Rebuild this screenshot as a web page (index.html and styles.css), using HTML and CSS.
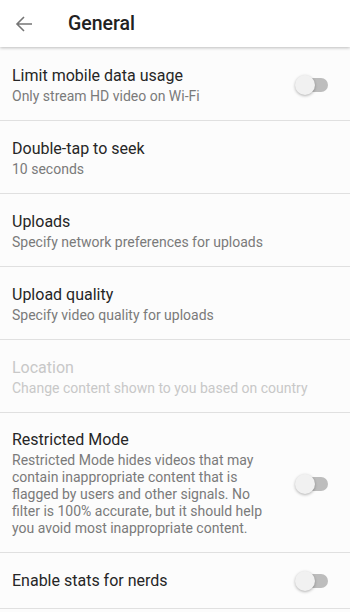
FILE: index.html
```html
<!DOCTYPE html>
<html lang="en">
<head>
  <meta charset="UTF-8">
  <meta name="viewport" content="width=device-width, initial-scale=1.0">
  <title>General</title>
  <link rel="stylesheet" href="styles.css">
</head>
<body>
  <div class="header">
    <a href="#" class="back-icon">
      <svg width="18" height="18" viewBox="0 0 18 18"><path d="M17 9H2M9 2L2 9l7 7" fill="none" stroke="#757575" stroke-width="1.6"/></svg>
    </a>
    <h1>General</h1>
  </div>

  <div class="list">
    <div class="row">
      <div class="row-text">
        <div class="title">Limit mobile data usage</div>
        <div class="sub">Only stream HD video on Wi-Fi</div>
      </div>
      <span class="switch"></span>
    </div>
    <div class="row">
      <div class="row-text">
        <div class="title">Double-tap to seek</div>
        <div class="sub">10 seconds</div>
      </div>
    </div>
    <div class="row">
      <div class="row-text">
        <div class="title">Uploads</div>
        <div class="sub">Specify network preferences for uploads</div>
      </div>
    </div>
    <div class="row">
      <div class="row-text">
        <div class="title">Upload quality</div>
        <div class="sub">Specify video quality for uploads</div>
      </div>
    </div>
    <div class="row disabled">
      <div class="row-text">
        <div class="title">Location</div>
        <div class="sub">Change content shown to you based on country</div>
      </div>
    </div>
    <div class="row">
      <div class="row-text">
        <div class="title">Restricted Mode</div>
        <div class="sub">Restricted Mode hides videos that may contain inappropriate content that is flagged by users and other signals. No filter is 100% accurate, but it should help you avoid most inappropriate content.</div>
      </div>
      <span class="switch"></span>
    </div>
    <div class="row single">
      <div class="row-text">
        <div class="title">Enable stats for nerds</div>
      </div>
      <span class="switch"></span>
    </div>
  </div>
</body>
</html>
```

FILE: styles.css
```css
body {
  font-family: Roboto, "Noto Sans", sans-serif;
  background-color: #fcfcfc;
  margin: 0;
  padding: 0;
  width: 350px;
  overflow: hidden;
}
.header {
  display: flex;
  align-items: center;
  height: 47px;
  background: #fff;
  box-shadow: 0 1px 3px rgba(0, 0, 0, 0.25);
  position: relative;
}
.back-icon {
  display: flex;
  align-items: center;
  justify-content: center;
  width: 48px;
  height: 47px;
}
.header h1 {
  margin: 0 0 0 20px;
  font-size: 19.5px;
  font-weight: 500;
  color: #212121;
}
.list {
  padding-top: 1px;
}
.row {
  display: flex;
  align-items: center;
  padding: 17px 22px 15px 12px;
  border-bottom: 1px solid #e0e0e0;
  min-height: 40px;
}
.row.single {
  padding: 18px 22px 17px 12px;
  min-height: 20px;
}
.row-text {
  flex: 1;
  max-width: 268px;
}
.title {
  font-size: 16px;
  line-height: 20px;
  color: #262626;
}
.sub {
  font-size: 14px;
  line-height: 17px;
  margin-top: 2px;
  color: #7a7a7a;
}
.row.disabled .row-text {
  max-width: none;
}
.disabled .title,
.disabled .sub {
  color: #c8c8c8;
}
.switch {
  position: relative;
  margin-left: auto;
  width: 30px;
  height: 14px;
  border-radius: 7px;
  background: #bdbdbd;
}
.switch::before {
  content: "";
  position: absolute;
  left: -3px;
  top: -3px;
  width: 20px;
  height: 20px;
  border-radius: 50%;
  background: #f1f1f1;
  box-shadow: 0 1px 3px rgba(0, 0, 0, 0.3);
}
```
